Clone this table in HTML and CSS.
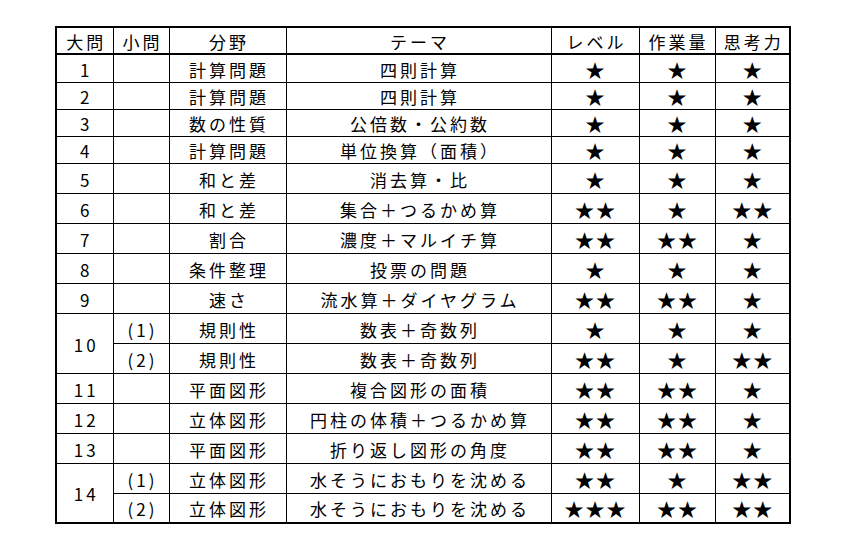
FILE: index.html
```html
<!DOCTYPE html>
<html lang="ja">
<head>
<meta charset="utf-8">
<link rel="stylesheet" href="styles.css">
</head>
<body>
<div class="sheet">
<table class="grid">
<colgroup>
<col class="c-dai"><col class="c-sho"><col class="c-bun"><col class="c-theme"><col class="c-lv"><col class="c-sa"><col class="c-shi">
</colgroup>
<thead>
<tr class="r-head"><th>大問</th><th>小問</th><th>分野</th><th>テーマ</th><th>レベル</th><th>作業量</th><th>思考力</th></tr>
</thead>
<tbody>
<tr class="r-a"><td>1</td><td></td><td>計算問題</td><td>四則計算</td><td class="st">★</td><td class="st">★</td><td class="st">★</td></tr>
<tr class="r-b"><td>2</td><td></td><td>計算問題</td><td>四則計算</td><td class="st">★</td><td class="st">★</td><td class="st">★</td></tr>
<tr class="r-b"><td>3</td><td></td><td>数の性質</td><td>公倍数・公約数</td><td class="st">★</td><td class="st">★</td><td class="st">★</td></tr>
<tr class="r-b"><td>4</td><td></td><td>計算問題</td><td>単位換算（面積）</td><td class="st">★</td><td class="st">★</td><td class="st">★</td></tr>
<tr class="r-c"><td>5</td><td></td><td>和と差</td><td>消去算・比</td><td class="st">★</td><td class="st">★</td><td class="st">★</td></tr>
<tr class="r-c"><td>6</td><td></td><td>和と差</td><td>集合＋つるかめ算</td><td class="st">★★</td><td class="st">★</td><td class="st">★★</td></tr>
<tr class="r-c"><td>7</td><td></td><td>割合</td><td>濃度＋マルイチ算</td><td class="st">★★</td><td class="st">★★</td><td class="st">★</td></tr>
<tr class="r-c"><td>8</td><td></td><td>条件整理</td><td>投票の問題</td><td class="st">★</td><td class="st">★</td><td class="st">★</td></tr>
<tr class="r-c"><td>9</td><td></td><td>速さ</td><td>流水算＋ダイヤグラム</td><td class="st">★★</td><td class="st">★★</td><td class="st">★</td></tr>
<tr class="r-c"><td rowspan="2">10</td><td>(1)</td><td>規則性</td><td>数表＋奇数列</td><td class="st">★</td><td class="st">★</td><td class="st">★</td></tr>
<tr class="r-c"><td>(2)</td><td>規則性</td><td>数表＋奇数列</td><td class="st">★★</td><td class="st">★</td><td class="st">★★</td></tr>
<tr class="r-c"><td>11</td><td></td><td>平面図形</td><td>複合図形の面積</td><td class="st">★★</td><td class="st">★★</td><td class="st">★</td></tr>
<tr class="r-c"><td>12</td><td></td><td>立体図形</td><td>円柱の体積＋つるかめ算</td><td class="st">★★</td><td class="st">★★</td><td class="st">★</td></tr>
<tr class="r-c"><td>13</td><td></td><td>平面図形</td><td>折り返し図形の角度</td><td class="st">★★</td><td class="st">★★</td><td class="st">★</td></tr>
<tr class="r-c"><td rowspan="2">14</td><td>(1)</td><td>立体図形</td><td>水そうにおもりを沈める</td><td class="st">★★</td><td class="st">★</td><td class="st">★★</td></tr>
<tr class="r-c"><td>(2)</td><td>立体図形</td><td>水そうにおもりを沈める</td><td class="st">★★★</td><td class="st">★★</td><td class="st">★★</td></tr>
</tbody>
</table>
</div>
</body>
</html>
```
FILE: styles.css
```css
html, body {
  margin: 0;
  background: #fff;
  color: #000;
  font-family: "Noto Sans CJK JP", "Noto Sans", sans-serif;
}
.sheet {
  padding: 26px 0 0 55px;
}
.grid {
  border-collapse: collapse;
  table-layout: fixed;
  width: 735px;
  border: 2px solid #000;
}
.c-dai { width: 57px; }
.c-sho { width: 56px; }
.c-bun { width: 117px; }
.c-theme { width: 265px; }
.c-lv { width: 88px; }
.c-sa { width: 76px; }
.c-shi { width: 75px; }
.grid th, .grid td {
  border: 1px solid #000;
  padding: 2px 0 0 3px;
  text-align: center;
  vertical-align: middle;
  font-size: 17px;
  font-weight: normal;
  letter-spacing: 3px;
  line-height: 1;
  white-space: nowrap;
}
.grid td.st {
  font-size: 19px;
  letter-spacing: 2px;
  padding-left: 2px;
}
.grid thead th {
  border-bottom: 2px solid #000;
}
.r-head { height: 27px; }
.r-a { height: 28px; }
.r-b { height: 27px; }
.r-c { height: 30px; }
```
